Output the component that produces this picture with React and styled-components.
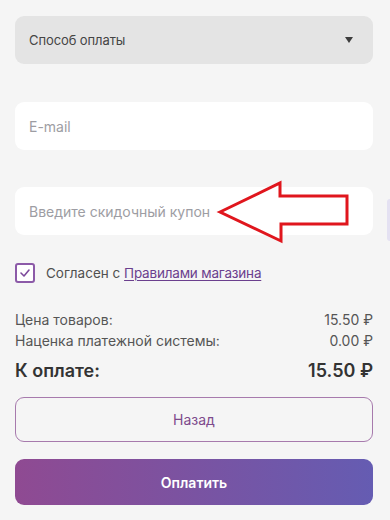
import React, { useState } from 'react'
import styled, { createGlobalStyle } from 'styled-components'

const GlobalStyle = createGlobalStyle`
  html, body {
    margin: 0;
    padding: 0;
    background: #f5f5f5;
    font-family: Inter, "Noto Sans", "Liberation Sans", sans-serif;
  }
`;

export default function App() {
  const [agreed, setAgreed] = useState(true);

  return (
    <StPage>
      <GlobalStyle />
      <StSelect>
        <span>Способ оплаты</span>
        <StCaret />
      </StSelect>

      <StInput type="email" placeholder="E-mail" $gap={38} />

      <StCouponWrap>
        <StInput type="text" placeholder="Введите скидочный купон" $gap={37} />
        <StArrow width="140" height="66" viewBox="0 0 140 66">
          <polygon
            points="5,33 65,4 65,17 132,17 132,45 66,45 66,62"
            fill="#fff"
            stroke="#e0161d"
            strokeWidth="3"
            strokeLinejoin="miter"
          />
        </StArrow>
        <StEdgeCard />
      </StCouponWrap>

      <StAgreeRow onClick={() => setAgreed(!agreed)}>
        <StCheckbox>
          {agreed && (
            <svg width="12" height="10" viewBox="0 0 12 10">
              <path d="M2 5 L5 8 L10 2" fill="none" stroke="#7d4a9c" strokeWidth="1.6" strokeLinecap="round" strokeLinejoin="round" />
            </svg>
          )}
        </StCheckbox>
        <span>Согласен с <StLink href="#">Правилами магазина</StLink></span>
      </StAgreeRow>

      <StSummary>
        <StRow>
          <span>Цена товаров:</span>
          <span>15.50 ₽</span>
        </StRow>
        <StRow>
          <span>Наценка платежной системы:</span>
          <span>0.00 ₽</span>
        </StRow>
        <StRow $total>
          <span>К оплате:</span>
          <span>15.50 ₽</span>
        </StRow>
      </StSummary>

      <StBackBtn>Назад</StBackBtn>
      <StPayBtn>Оплатить</StPayBtn>
    </StPage>
  )
}

const StPage = styled.div`
  width: 390px;
  height: 520px;
  box-sizing: border-box;
  padding: 16px 17px 0 15px;
  display: flex;
  flex-direction: column;
  overflow: hidden;
`;
const StSelect = styled.div`
  height: 48px;
  box-sizing: border-box;
  background: #e4e4e4;
  border-radius: 9px;
  padding: 0 20px 0 14px;
  display: flex;
  align-items: center;
  justify-content: space-between;
  font-size: 13px;
  letter-spacing: -0.1px;
  color: #454545;
`;
const StCaret = styled.span`
  width: 0;
  height: 0;
  border-left: 4.5px solid transparent;
  border-right: 4.5px solid transparent;
  border-top: 6px solid #3d3d3d;
`;
const StInput = styled.input`
  display: block;
  width: 100%;
  height: 48px;
  box-sizing: border-box;
  margin-top: ${props => props.$gap}px;
  border: none;
  outline: none;
  border-radius: 9px;
  background: #fff;
  padding: 0 14px;
  font-family: inherit;
  font-size: 14px;
  color: #333;

  &::placeholder {
    color: #9d9da3;
  }
`;
const StCouponWrap = styled.div`
  position: relative;
`;
const StArrow = styled.svg`
  position: absolute;
  left: 200px;
  top: 29px;
  overflow: visible;
`;
const StEdgeCard = styled.div`
  position: absolute;
  right: -17px;
  top: 49px;
  width: 3px;
  height: 42px;
  border-radius: 3px 0 0 3px;
  background: #e4e1f2;
`;
const StAgreeRow = styled.label`
  display: flex;
  align-items: center;
  gap: 11px;
  margin-top: 28px;
  font-size: 13.5px;
  color: #505050;
  cursor: pointer;
`;
const StCheckbox = styled.span`
  width: 20px;
  height: 20px;
  box-sizing: border-box;
  border: 2px solid #8c5aa8;
  border-radius: 3px;
  display: flex;
  align-items: center;
  justify-content: center;
  background: #fff;
`;
const StLink = styled.a`
  color: #6b3f8e;
  letter-spacing: -0.2px;
  text-decoration: underline;
  text-underline-offset: 2px;
`;
const StSummary = styled.div`
  display: flex;
  flex-direction: column;
  margin-top: 26px;
`;
const StRow = styled.div`
  display: flex;
  justify-content: space-between;
  align-items: center;
  font-size: ${props => (props.$total ? '18px' : '14px')};
  font-weight: ${props => (props.$total ? 600 : 400)};
  line-height: ${props => (props.$total ? '26px' : '21px')};
  color: ${props => (props.$total ? '#333' : '#555')};
  margin-top: ${props => (props.$total ? '7px' : '0')};
`;
const StBackBtn = styled.button`
  margin-top: 13px;
  height: 45px;
  border: 1px solid #a77aad;
  border-radius: 9px;
  background: transparent;
  font-family: inherit;
  font-size: 14px;
  color: #7d4a8c;
  cursor: pointer;
`;
const StPayBtn = styled.button`
  margin-top: 17px;
  height: 46px;
  border: none;
  border-radius: 9px;
  background: linear-gradient(90deg, #8f4a92 0%, #7c52a0 45%, #655cb2 100%);
  font-family: inherit;
  font-size: 14px;
  font-weight: 600;
  color: #fff;
  cursor: pointer;
`;
